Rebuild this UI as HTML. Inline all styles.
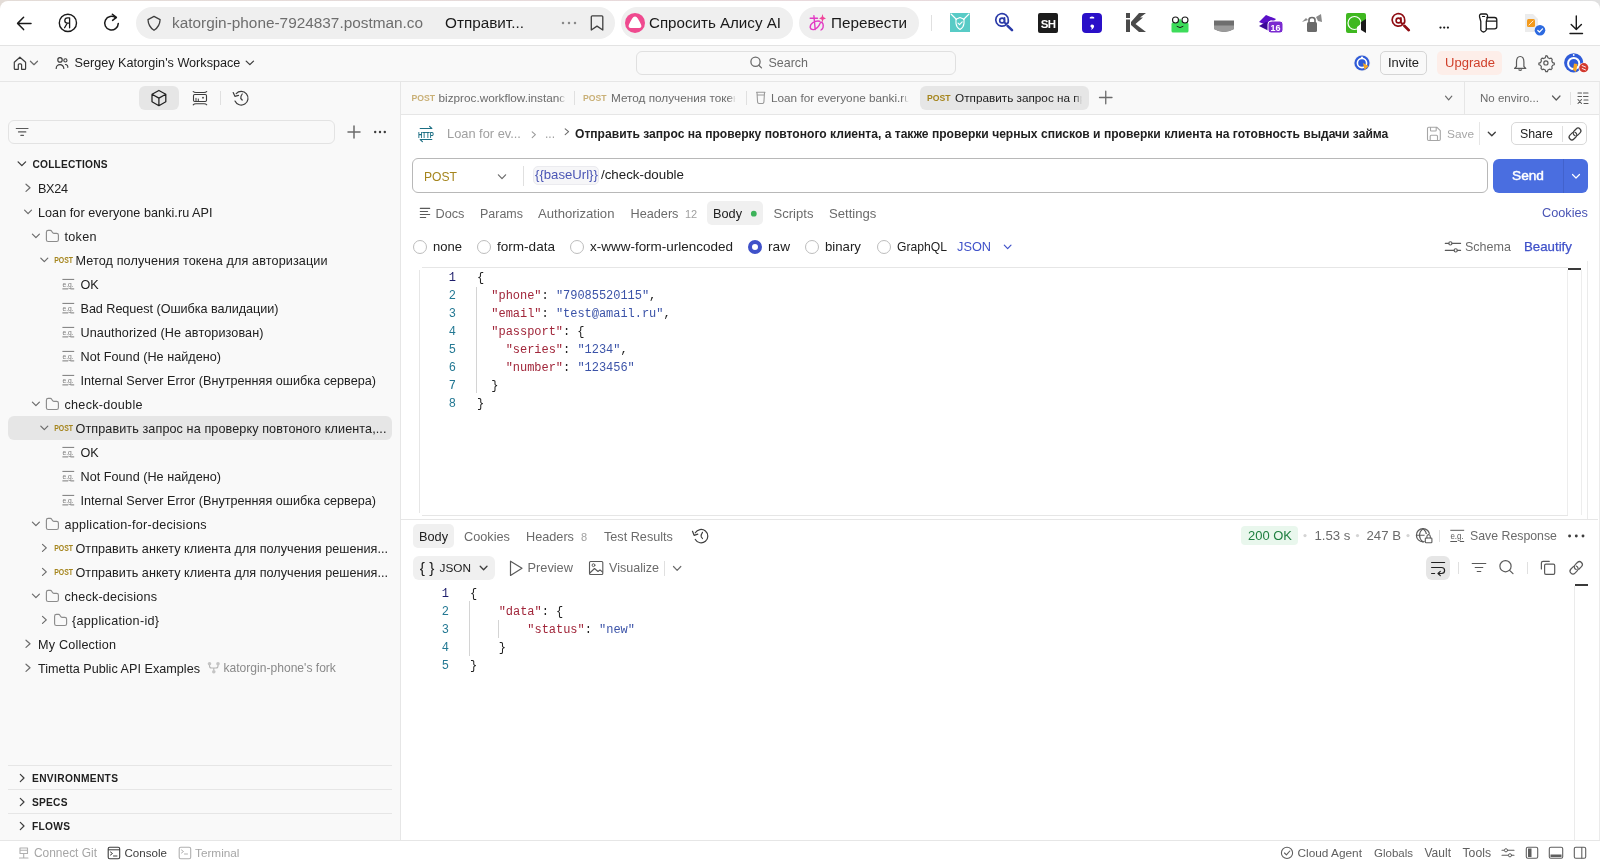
<!DOCTYPE html><html><head><meta charset="utf-8"><style>
html,body{margin:0;padding:0;width:1600px;height:865px;overflow:hidden;background:#fff;}
#root{position:absolute;left:0;top:0;width:1600px;height:865px;will-change:transform;}
.a{position:absolute;}
.t{white-space:pre;}
svg.a{overflow:visible;}
</style></head><body><div id="root">
<div class="a" style="left:0px;top:0px;width:1600px;height:865px;background:#ffffff;"></div>
<div class="a" style="left:0px;top:0px;width:1600px;height:12px;background:linear-gradient(to right,#e3dcd7,#e9d9dc 50%,#e0e0e0);"></div>
<div class="a" style="left:0px;top:1px;width:1600px;height:45px;background:#ffffff;border-radius:8px 8px 0 0;"></div>
<div class="a" style="left:0px;top:45px;width:1600px;height:1px;background:#e3e3e3;"></div>
<div class="a" style="left:0px;top:46px;width:1600px;height:35px;background:#f9f9f9;"></div>
<div class="a" style="left:0px;top:81px;width:1600px;height:1px;background:#e6e6e6;"></div>
<div class="a" style="left:0px;top:82px;width:400px;height:758px;background:#f9f9f9;"></div>
<div class="a" style="left:400px;top:82px;width:1px;height:758px;background:#e6e6e6;"></div>
<div class="a" style="left:401px;top:82px;width:1199px;height:32px;background:#f9f9f9;"></div>
<div class="a" style="left:401px;top:114px;width:1199px;height:1px;background:#e6e6e6;"></div>
<div class="a" style="left:1599px;top:82px;width:1px;height:758px;background:#ebebeb;"></div>
<div class="a" style="left:0px;top:840px;width:1600px;height:1px;background:#e6e6e6;"></div>
<div class="a" style="left:0px;top:841px;width:1600px;height:24px;background:#ffffff;"></div>
<div class="a" style="left:136px;top:7px;width:479px;height:32px;background:#efefef;border-radius:16px;"></div>
<div class="a t" style="left:172px;top:13px;line-height:20px;font-family:'Liberation Sans', sans-serif;font-size:15.36px;color:#6e6e6e;">katorgin-phone-7924837.postman.co</div>
<div class="a t" style="left:445px;top:13px;line-height:20px;font-family:'Liberation Sans', sans-serif;font-size:15.31px;color:#1a1a1a;">Отправит...</div>
<div class="a" style="left:621px;top:7px;width:172px;height:32px;background:#efefef;border-radius:16px;"></div>
<div class="a t" style="left:649px;top:13px;line-height:20px;font-family:'Liberation Sans', sans-serif;font-size:15.13px;color:#1a1a1a;">Спросить Алису AI</div>
<div class="a" style="left:799px;top:7px;width:120px;height:32px;background:#efefef;border-radius:16px;"></div>
<div class="a t" style="left:831px;top:13px;line-height:20px;font-family:'Liberation Sans', sans-serif;font-size:15.26px;color:#1a1a1a;">Перевести</div>
<div class="a" style="left:931px;top:15px;width:1px;height:16px;background:#e0e0e0;"></div>
<div class="a t" style="left:74.5px;top:53px;line-height:20px;font-family:'Liberation Sans', sans-serif;font-size:12.65px;color:#212121;">Sergey Katorgin&#x27;s Workspace</div>
<div class="a" style="left:636px;top:51px;width:320px;height:24px;background:#f9f9f9;border:1px solid #e0e0e0;box-sizing:border-box;border-radius:6px;"></div>
<div class="a t" style="left:768.5px;top:53px;line-height:20px;font-family:'Liberation Sans', sans-serif;font-size:12.46px;color:#6b6b6b;">Search</div>
<div class="a" style="left:1380px;top:51px;width:47px;height:24px;border:1px solid #d5d5d5;box-sizing:border-box;border-radius:5px;"></div>
<div class="a t" style="left:1388px;top:53px;line-height:20px;font-family:'Liberation Sans', sans-serif;font-size:12.97px;color:#212121;">Invite</div>
<div class="a" style="left:1437px;top:51px;width:65px;height:24px;background:#fdeee9;border-radius:5px;"></div>
<div class="a t" style="left:1445px;top:53px;line-height:20px;font-family:'Liberation Sans', sans-serif;font-size:13.03px;color:#d0402b;">Upgrade</div>
<div class="a" style="left:139px;top:86px;width:40px;height:24px;background:#e6e6e6;border-radius:6px;"></div>
<div class="a" style="left:220px;top:91px;width:1px;height:14px;background:#e0e0e0;"></div>
<div class="a" style="left:8px;top:120px;width:327px;height:24px;background:#f9f9f9;border:1px solid #e3e3e3;box-sizing:border-box;border-radius:6px;"></div>
<div class="a t" style="left:32.5px;top:155px;line-height:20px;font-family:'Liberation Sans', sans-serif;font-size:10.2px;color:#212121;font-weight:700;letter-spacing:0.198px;">COLLECTIONS</div>
<div class="a" style="left:8px;top:416px;width:384px;height:24px;background:#e6e6e6;border-radius:6px;"></div>
<div class="a t" style="left:38px;top:179px;line-height:20px;font-family:'Liberation Sans', sans-serif;font-size:12.64px;color:#212121;letter-spacing:-0.297px;">BX24</div>
<div class="a t" style="left:38px;top:203px;line-height:20px;font-family:'Liberation Sans', sans-serif;font-size:12.64px;color:#212121;letter-spacing:0.039px;">Loan for everyone banki.ru API</div>
<div class="a t" style="left:64.5px;top:227px;line-height:20px;font-family:'Liberation Sans', sans-serif;font-size:12.64px;color:#212121;letter-spacing:0.277px;">token</div>
<div class="a t" style="left:75.5px;top:251px;line-height:20px;font-family:'Liberation Sans', sans-serif;font-size:12.64px;color:#212121;letter-spacing:0.108px;">Метод получения токена для авторизации</div>
<div class="a t" style="left:80.5px;top:275px;line-height:20px;font-family:'Liberation Sans', sans-serif;font-size:12.64px;color:#212121;">OK</div>
<div class="a t" style="left:80.5px;top:299px;line-height:20px;font-family:'Liberation Sans', sans-serif;font-size:12.64px;color:#212121;letter-spacing:-0.041px;">Bad Request (Ошибка валидации)</div>
<div class="a t" style="left:80.5px;top:323px;line-height:20px;font-family:'Liberation Sans', sans-serif;font-size:12.64px;color:#212121;letter-spacing:0.104px;">Unauthorized (Не авторизован)</div>
<div class="a t" style="left:80.5px;top:347px;line-height:20px;font-family:'Liberation Sans', sans-serif;font-size:12.64px;color:#212121;letter-spacing:0.026px;">Not Found (Не найдено)</div>
<div class="a t" style="left:80.5px;top:371px;line-height:20px;font-family:'Liberation Sans', sans-serif;font-size:12.64px;color:#212121;letter-spacing:0.017px;">Internal Server Error (Внутренняя ошибка сервера)</div>
<div class="a t" style="left:64.5px;top:395px;line-height:20px;font-family:'Liberation Sans', sans-serif;font-size:12.64px;color:#212121;letter-spacing:0.263px;">check-double</div>
<div class="a t" style="left:75.5px;top:419px;line-height:20px;font-family:'Liberation Sans', sans-serif;font-size:12.64px;color:#212121;letter-spacing:0.088px;">Отправить запрос на проверку повтоного клиента,...</div>
<div class="a t" style="left:80.5px;top:443px;line-height:20px;font-family:'Liberation Sans', sans-serif;font-size:12.64px;color:#212121;">OK</div>
<div class="a t" style="left:80.5px;top:467px;line-height:20px;font-family:'Liberation Sans', sans-serif;font-size:12.64px;color:#212121;letter-spacing:0.026px;">Not Found (Не найдено)</div>
<div class="a t" style="left:80.5px;top:491px;line-height:20px;font-family:'Liberation Sans', sans-serif;font-size:12.64px;color:#212121;letter-spacing:0.017px;">Internal Server Error (Внутренняя ошибка сервера)</div>
<div class="a t" style="left:64.5px;top:515px;line-height:20px;font-family:'Liberation Sans', sans-serif;font-size:12.64px;color:#212121;letter-spacing:0.244px;">application-for-decisions</div>
<div class="a t" style="left:75.5px;top:539px;line-height:20px;font-family:'Liberation Sans', sans-serif;font-size:12.64px;color:#212121;letter-spacing:0.026px;">Отправить анкету клиента для получения решения...</div>
<div class="a t" style="left:75.5px;top:563px;line-height:20px;font-family:'Liberation Sans', sans-serif;font-size:12.64px;color:#212121;letter-spacing:0.026px;">Отправить анкету клиента для получения решения...</div>
<div class="a t" style="left:64.5px;top:587px;line-height:20px;font-family:'Liberation Sans', sans-serif;font-size:12.64px;color:#212121;letter-spacing:0.191px;">check-decisions</div>
<div class="a t" style="left:72px;top:611px;line-height:20px;font-family:'Liberation Sans', sans-serif;font-size:12.64px;color:#212121;letter-spacing:0.278px;">{application-id}</div>
<div class="a t" style="left:38px;top:635px;line-height:20px;font-family:'Liberation Sans', sans-serif;font-size:12.64px;color:#212121;letter-spacing:0.185px;">My Collection</div>
<div class="a t" style="left:38px;top:659px;line-height:20px;font-family:'Liberation Sans', sans-serif;font-size:12.64px;color:#212121;letter-spacing:0.014px;">Timetta Public API Examples</div>
<div class="a t" style="left:223.5px;top:658px;line-height:20px;font-family:'Liberation Sans', sans-serif;font-size:12.09px;color:#8a8a8a;">katorgin-phone&#x27;s fork</div>
<div class="a" style="left:8px;top:765px;width:384px;height:1px;background:#e6e6e6;"></div>
<div class="a" style="left:8px;top:789px;width:384px;height:1px;background:#e6e6e6;"></div>
<div class="a" style="left:8px;top:813px;width:384px;height:1px;background:#e6e6e6;"></div>
<div class="a t" style="left:32px;top:769px;line-height:20px;font-family:'Liberation Sans', sans-serif;font-size:10.2px;color:#212121;font-weight:700;letter-spacing:0.357px;">ENVIRONMENTS</div>
<div class="a t" style="left:32px;top:793px;line-height:20px;font-family:'Liberation Sans', sans-serif;font-size:10.2px;color:#212121;font-weight:700;letter-spacing:0.238px;">SPECS</div>
<div class="a t" style="left:32px;top:817px;line-height:20px;font-family:'Liberation Sans', sans-serif;font-size:10.2px;color:#212121;font-weight:700;letter-spacing:0.305px;">FLOWS</div>
<div class="a t" style="left:34px;top:843px;line-height:20px;font-family:'Liberation Sans', sans-serif;font-size:11.93px;color:#a6a6a6;">Connect Git</div>
<div class="a t" style="left:124.5px;top:843px;line-height:20px;font-family:'Liberation Sans', sans-serif;font-size:11.58px;color:#3d3d3d;">Console</div>
<div class="a t" style="left:195px;top:843px;line-height:20px;font-family:'Liberation Sans', sans-serif;font-size:11.77px;color:#a6a6a6;">Terminal</div>
<div class="a t" style="left:1297.5px;top:843px;line-height:20px;font-family:'Liberation Sans', sans-serif;font-size:11.84px;color:#5f5f5f;">Cloud Agent</div>
<div class="a t" style="left:1374px;top:843px;line-height:20px;font-family:'Liberation Sans', sans-serif;font-size:11.5px;color:#5f5f5f;">Globals</div>
<div class="a t" style="left:1424.5px;top:843px;line-height:20px;font-family:'Liberation Sans', sans-serif;font-size:12.01px;color:#5f5f5f;">Vault</div>
<div class="a t" style="left:1462.5px;top:843px;line-height:20px;font-family:'Liberation Sans', sans-serif;font-size:12.21px;color:#5f5f5f;">Tools</div>
<div class="a t" style="left:411.4px;top:88px;line-height:20px;font-family:'Liberation Sans', sans-serif;font-size:8.66px;color:#c9b077;font-weight:700;">POST</div>
<div class="a t" style="left:438.5px;top:88px;line-height:20px;font-family:'Liberation Sans', sans-serif;font-size:11.75px;color:#6b6b6b;width:127px;overflow:hidden;-webkit-mask-image:linear-gradient(to right,#000 calc(100% - 7px),transparent);">bizproc.workflow.instance.start</div>
<div class="a" style="left:574px;top:91px;width:1px;height:14px;background:#e0e0e0;"></div>
<div class="a t" style="left:583px;top:88px;line-height:20px;font-family:'Liberation Sans', sans-serif;font-size:8.66px;color:#c9b077;font-weight:700;">POST</div>
<div class="a t" style="left:611px;top:88px;line-height:20px;font-family:'Liberation Sans', sans-serif;font-size:11.75px;color:#6b6b6b;width:125px;overflow:hidden;-webkit-mask-image:linear-gradient(to right,#000 calc(100% - 7px),transparent);">Метод получения токена</div>
<div class="a" style="left:746px;top:91px;width:1px;height:14px;background:#e0e0e0;"></div>
<div class="a t" style="left:771px;top:88px;line-height:20px;font-family:'Liberation Sans', sans-serif;font-size:11.75px;color:#6b6b6b;width:138px;overflow:hidden;-webkit-mask-image:linear-gradient(to right,#000 calc(100% - 7px),transparent);">Loan for everyone banki.ru API</div>
<div class="a" style="left:920px;top:86px;width:169px;height:24px;background:#e6e6e6;border-radius:6px;"></div>
<div class="a t" style="left:927px;top:88px;line-height:20px;font-family:'Liberation Sans', sans-serif;font-size:8.66px;color:#a5851d;font-weight:700;">POST</div>
<div class="a t" style="left:955px;top:88px;line-height:20px;font-family:'Liberation Sans', sans-serif;font-size:11.75px;color:#212121;width:127px;overflow:hidden;-webkit-mask-image:linear-gradient(to right,#000 calc(100% - 7px),transparent);">Отправить запрос на проверку</div>
<div class="a t" style="left:1480px;top:88px;line-height:20px;font-family:'Liberation Sans', sans-serif;font-size:11.54px;color:#6b6b6b;">No enviro...</div>
<div class="a" style="left:1464px;top:82px;width:1px;height:32px;background:#e6e6e6;"></div>
<div class="a" style="left:1570px;top:92px;width:1px;height:13px;background:#e0e0e0;"></div>
<div class="a t" style="left:447px;top:124px;line-height:20px;font-family:'Liberation Sans', sans-serif;font-size:12.84px;color:#a0a0a0;">Loan for ev...</div>
<div class="a t" style="left:545px;top:124px;line-height:20px;font-family:'Liberation Sans', sans-serif;font-size:11.99px;color:#a0a0a0;">...</div>
<div class="a t" style="left:575px;top:124px;line-height:20px;font-family:'Liberation Sans', sans-serif;font-size:12.09px;color:#212121;font-weight:700;">Отправить запрос на проверку повтоного клиента, а также проверки черных списков и проверки клиента на готовность выдачи займа</div>
<div class="a t" style="left:1447px;top:124px;line-height:20px;font-family:'Liberation Sans', sans-serif;font-size:11.84px;color:#a6a6a6;">Save</div>
<div class="a" style="left:1479px;top:122px;width:1px;height:23px;background:#e6e6e6;"></div>
<div class="a" style="left:1511px;top:122px;width:76px;height:23px;border:1px solid #d9d9d9;box-sizing:border-box;border-radius:5px;"></div>
<div class="a t" style="left:1520px;top:124px;line-height:20px;font-family:'Liberation Sans', sans-serif;font-size:12.36px;color:#212121;">Share</div>
<div class="a" style="left:1562px;top:126px;width:1px;height:16px;background:#e0e0e0;"></div>
<div class="a" style="left:412px;top:158px;width:1076px;height:35px;border:1px solid #b8b8b8;box-sizing:border-box;border-radius:6px;"></div>
<div class="a t" style="left:424px;top:167px;line-height:20px;font-family:'Liberation Sans', sans-serif;font-size:12.12px;color:#a5851d;">POST</div>
<div class="a" style="left:523px;top:166px;width:1px;height:20px;background:#e0e0e0;"></div>
<div class="a" style="left:533px;top:166px;width:66px;height:19px;background:#f6f6f8;border:1px solid #ebebef;box-sizing:border-box;border-radius:5px;"></div>
<div class="a t" style="left:535px;top:165px;line-height:20px;font-family:'Liberation Sans', sans-serif;font-size:13.17px;color:#4a55b5;">{{baseUrl}}</div>
<div class="a t" style="left:601px;top:165px;line-height:20px;font-family:'Liberation Sans', sans-serif;font-size:13.33px;color:#212121;">/check-double</div>
<div class="a" style="left:1493px;top:159px;width:95px;height:34px;background:#4a6ee0;border-radius:6px;"></div>
<div class="a" style="left:1563px;top:159px;width:1px;height:34px;background:#4262cc;"></div>
<div class="a t" style="left:1512px;top:166px;line-height:20px;font-family:'Liberation Sans', sans-serif;font-size:13.7px;color:#ffffff;-webkit-text-stroke:0.45px #fff;">Send</div>
<div class="a t" style="left:435.5px;top:204px;line-height:20px;font-family:'Liberation Sans', sans-serif;font-size:12.73px;color:#6b6b6b;">Docs</div>
<div class="a t" style="left:480px;top:204px;line-height:20px;font-family:'Liberation Sans', sans-serif;font-size:12.48px;color:#6b6b6b;">Params</div>
<div class="a t" style="left:538px;top:204px;line-height:20px;font-family:'Liberation Sans', sans-serif;font-size:13.1px;color:#6b6b6b;">Authorization</div>
<div class="a t" style="left:630.5px;top:204px;line-height:20px;font-family:'Liberation Sans', sans-serif;font-size:12.7px;color:#6b6b6b;">Headers</div>
<div class="a t" style="left:685px;top:204px;line-height:20px;font-family:'Liberation Sans', sans-serif;font-size:11px;color:#a0a0a0;">12</div>
<div class="a" style="left:707px;top:201px;width:56px;height:24px;background:#f0f0f0;border-radius:5px;"></div>
<div class="a t" style="left:713px;top:204px;line-height:20px;font-family:'Liberation Sans', sans-serif;font-size:12.72px;color:#212121;">Body</div>
<div class="a t" style="left:773.5px;top:204px;line-height:20px;font-family:'Liberation Sans', sans-serif;font-size:13.09px;color:#6b6b6b;">Scripts</div>
<div class="a t" style="left:829px;top:204px;line-height:20px;font-family:'Liberation Sans', sans-serif;font-size:13.14px;color:#6b6b6b;">Settings</div>
<div class="a t" style="left:1542px;top:203px;line-height:20px;font-family:'Liberation Sans', sans-serif;font-size:12.73px;color:#4a55b5;">Cookies</div>
<div class="a" style="left:413px;top:240px;width:14px;height:14px;background:#fff;border:1px solid #bdbdbd;box-sizing:border-box;border-radius:7px;"></div>
<div class="a t" style="left:433px;top:237px;line-height:20px;font-family:'Liberation Sans', sans-serif;font-size:13.04px;color:#212121;">none</div>
<div class="a" style="left:477px;top:240px;width:14px;height:14px;background:#fff;border:1px solid #bdbdbd;box-sizing:border-box;border-radius:7px;"></div>
<div class="a t" style="left:497px;top:237px;line-height:20px;font-family:'Liberation Sans', sans-serif;font-size:13.55px;color:#212121;">form-data</div>
<div class="a" style="left:570px;top:240px;width:14px;height:14px;background:#fff;border:1px solid #bdbdbd;box-sizing:border-box;border-radius:7px;"></div>
<div class="a t" style="left:590px;top:237px;line-height:20px;font-family:'Liberation Sans', sans-serif;font-size:13.47px;color:#212121;">x-www-form-urlencoded</div>
<div class="a" style="left:805px;top:240px;width:14px;height:14px;background:#fff;border:1px solid #bdbdbd;box-sizing:border-box;border-radius:7px;"></div>
<div class="a t" style="left:825px;top:237px;line-height:20px;font-family:'Liberation Sans', sans-serif;font-size:13.21px;color:#212121;">binary</div>
<div class="a" style="left:877px;top:240px;width:14px;height:14px;background:#fff;border:1px solid #bdbdbd;box-sizing:border-box;border-radius:7px;"></div>
<div class="a t" style="left:897px;top:237px;line-height:20px;font-family:'Liberation Sans', sans-serif;font-size:12.15px;color:#212121;">GraphQL</div>
<div class="a" style="left:748px;top:240px;width:14px;height:14px;background:#fff;border:4px solid #3f51c9;box-sizing:border-box;border-radius:7px;"></div>
<div class="a t" style="left:768px;top:237px;line-height:20px;font-family:'Liberation Sans', sans-serif;font-size:13.65px;color:#212121;">raw</div>
<div class="a t" style="left:957px;top:237px;line-height:20px;font-family:'Liberation Sans', sans-serif;font-size:12.75px;color:#3f51c9;">JSON</div>
<div class="a t" style="left:1465px;top:237px;line-height:20px;font-family:'Liberation Sans', sans-serif;font-size:12.54px;color:#6b6b6b;">Schema</div>
<div class="a t" style="left:1524px;top:237px;line-height:20px;font-family:'Liberation Sans', sans-serif;font-size:13.28px;color:#3f51c9;-webkit-text-stroke:0.25px #3f51c9;">Beautify</div>
<div class="a" style="left:422px;top:267px;width:1146px;height:1px;background:#e6e6e6;"></div>
<div class="a" style="left:419px;top:270px;width:1px;height:243px;background:#e6e6e6;"></div>
<div class="a" style="left:422px;top:515px;width:1146px;height:1px;background:#e6e6e6;"></div>
<div class="a" style="left:1567px;top:270px;width:1px;height:245px;background:#ededed;"></div>
<div class="a" style="left:1581px;top:270px;width:1px;height:245px;background:#ededed;"></div>
<div class="a" style="left:1568px;top:268px;width:13px;height:2px;background:#3a3a3a;"></div>
<div class="a" style="left:1587px;top:261px;width:1px;height:258px;background:#ebebeb;"></div>
<div class="a" style="left:401px;top:519px;width:1197px;height:1px;background:#e6e6e6;"></div>
<div class="a t" style="left:436px;top:268px;line-height:20px;font-family:'Liberation Mono', monospace;font-size:12px;color:#1d1d6b;text-align:right;width:20px;">1</div>
<div class="a t" style="left:477px;top:268px;line-height:20px;font-family:'Liberation Mono', monospace;font-size:12px;color:#212121;letter-spacing:-0.033px;"><span style="color:#212121">{</span></div>
<div class="a t" style="left:436px;top:286px;line-height:20px;font-family:'Liberation Mono', monospace;font-size:12px;color:#237893;text-align:right;width:20px;">2</div>
<div class="a t" style="left:477px;top:286px;line-height:20px;font-family:'Liberation Mono', monospace;font-size:12px;color:#212121;letter-spacing:-0.033px;"><span style="color:#212121">  </span><span style="color:#a1263a">&quot;phone&quot;</span><span style="color:#212121">: </span><span style="color:#3b53a8">&quot;79085520115&quot;</span><span style="color:#212121">,</span></div>
<div class="a t" style="left:436px;top:304px;line-height:20px;font-family:'Liberation Mono', monospace;font-size:12px;color:#237893;text-align:right;width:20px;">3</div>
<div class="a t" style="left:477px;top:304px;line-height:20px;font-family:'Liberation Mono', monospace;font-size:12px;color:#212121;letter-spacing:-0.033px;"><span style="color:#212121">  </span><span style="color:#a1263a">&quot;email&quot;</span><span style="color:#212121">: </span><span style="color:#3b53a8">&quot;test@amail.ru&quot;</span><span style="color:#212121">,</span></div>
<div class="a t" style="left:436px;top:322px;line-height:20px;font-family:'Liberation Mono', monospace;font-size:12px;color:#237893;text-align:right;width:20px;">4</div>
<div class="a t" style="left:477px;top:322px;line-height:20px;font-family:'Liberation Mono', monospace;font-size:12px;color:#212121;letter-spacing:-0.033px;"><span style="color:#212121">  </span><span style="color:#a1263a">&quot;passport&quot;</span><span style="color:#212121">: {</span></div>
<div class="a t" style="left:436px;top:340px;line-height:20px;font-family:'Liberation Mono', monospace;font-size:12px;color:#237893;text-align:right;width:20px;">5</div>
<div class="a t" style="left:477px;top:340px;line-height:20px;font-family:'Liberation Mono', monospace;font-size:12px;color:#212121;letter-spacing:-0.033px;"><span style="color:#212121">    </span><span style="color:#a1263a">&quot;series&quot;</span><span style="color:#212121">: </span><span style="color:#3b53a8">&quot;1234&quot;</span><span style="color:#212121">,</span></div>
<div class="a t" style="left:436px;top:358px;line-height:20px;font-family:'Liberation Mono', monospace;font-size:12px;color:#237893;text-align:right;width:20px;">6</div>
<div class="a t" style="left:477px;top:358px;line-height:20px;font-family:'Liberation Mono', monospace;font-size:12px;color:#212121;letter-spacing:-0.033px;"><span style="color:#212121">    </span><span style="color:#a1263a">&quot;number&quot;</span><span style="color:#212121">: </span><span style="color:#3b53a8">&quot;123456&quot;</span></div>
<div class="a t" style="left:436px;top:376px;line-height:20px;font-family:'Liberation Mono', monospace;font-size:12px;color:#237893;text-align:right;width:20px;">7</div>
<div class="a t" style="left:477px;top:376px;line-height:20px;font-family:'Liberation Mono', monospace;font-size:12px;color:#212121;letter-spacing:-0.033px;"><span style="color:#212121">  }</span></div>
<div class="a t" style="left:436px;top:394px;line-height:20px;font-family:'Liberation Mono', monospace;font-size:12px;color:#237893;text-align:right;width:20px;">8</div>
<div class="a t" style="left:477px;top:394px;line-height:20px;font-family:'Liberation Mono', monospace;font-size:12px;color:#212121;letter-spacing:-0.033px;"><span style="color:#212121">}</span></div>
<div class="a" style="left:476px;top:287px;width:1px;height:106px;background:#d4d4d4;"></div>
<div class="a" style="left:413px;top:524px;width:41px;height:24px;background:#f0f0f0;border-radius:5px;"></div>
<div class="a t" style="left:419px;top:527px;line-height:20px;font-family:'Liberation Sans', sans-serif;font-size:12.72px;color:#212121;">Body</div>
<div class="a t" style="left:464px;top:527px;line-height:20px;font-family:'Liberation Sans', sans-serif;font-size:12.73px;color:#6b6b6b;">Cookies</div>
<div class="a t" style="left:526px;top:527px;line-height:20px;font-family:'Liberation Sans', sans-serif;font-size:12.7px;color:#6b6b6b;">Headers</div>
<div class="a t" style="left:581px;top:527px;line-height:20px;font-family:'Liberation Sans', sans-serif;font-size:11px;color:#a0a0a0;">8</div>
<div class="a t" style="left:604px;top:527px;line-height:20px;font-family:'Liberation Sans', sans-serif;font-size:12.67px;color:#6b6b6b;">Test Results</div>
<div class="a" style="left:1241px;top:526px;width:57px;height:19px;background:#e9f7ed;border-radius:4px;"></div>
<div class="a t" style="left:1248px;top:526px;line-height:20px;font-family:'Liberation Sans', sans-serif;font-size:12.97px;color:#1e7f3f;">200 OK</div>
<div class="a t" style="left:1314.5px;top:526px;line-height:20px;font-family:'Liberation Sans', sans-serif;font-size:13.21px;color:#6b6b6b;">1.53 s</div>
<div class="a t" style="left:1366.5px;top:526px;line-height:20px;font-family:'Liberation Sans', sans-serif;font-size:13.2px;color:#6b6b6b;">247 B</div>
<div class="a t" style="left:1470px;top:526px;line-height:20px;font-family:'Liberation Sans', sans-serif;font-size:12.32px;color:#6b6b6b;">Save Response</div>
<div class="a" style="left:1439px;top:530px;width:1px;height:12px;background:#e0e0e0;"></div>
<div class="a" style="left:413px;top:556px;width:82px;height:24px;background:#f0f0f0;border-radius:6px;"></div>
<div class="a t" style="left:439.5px;top:558px;line-height:20px;font-family:'Liberation Sans', sans-serif;font-size:11.81px;color:#212121;">JSON</div>
<div class="a t" style="left:527.5px;top:558px;line-height:20px;font-family:'Liberation Sans', sans-serif;font-size:12.79px;color:#6b6b6b;">Preview</div>
<div class="a t" style="left:609px;top:558px;line-height:20px;font-family:'Liberation Sans', sans-serif;font-size:12.55px;color:#6b6b6b;">Visualize</div>
<div class="a" style="left:664px;top:561px;width:1px;height:15px;background:#e0e0e0;"></div>
<div class="a" style="left:1426px;top:556px;width:24px;height:24px;background:#e6e6e6;border-radius:6px;"></div>
<div class="a" style="left:1458px;top:562px;width:1px;height:12px;background:#e0e0e0;"></div>
<div class="a" style="left:1527px;top:562px;width:1px;height:12px;background:#e0e0e0;"></div>
<div class="a" style="left:1575px;top:584px;width:13px;height:2px;background:#3a3a3a;"></div>
<div class="a" style="left:1574px;top:586px;width:1px;height:254px;background:#ebebeb;"></div>
<div class="a t" style="left:429px;top:584px;line-height:20px;font-family:'Liberation Mono', monospace;font-size:12px;color:#1d1d6b;text-align:right;width:20px;">1</div>
<div class="a t" style="left:470px;top:584px;line-height:20px;font-family:'Liberation Mono', monospace;font-size:12px;color:#212121;letter-spacing:-0.033px;"><span style="color:#212121">{</span></div>
<div class="a t" style="left:429px;top:602px;line-height:20px;font-family:'Liberation Mono', monospace;font-size:12px;color:#237893;text-align:right;width:20px;">2</div>
<div class="a t" style="left:470px;top:602px;line-height:20px;font-family:'Liberation Mono', monospace;font-size:12px;color:#212121;letter-spacing:-0.033px;"><span style="color:#212121">    </span><span style="color:#a1263a">&quot;data&quot;</span><span style="color:#212121">: {</span></div>
<div class="a t" style="left:429px;top:620px;line-height:20px;font-family:'Liberation Mono', monospace;font-size:12px;color:#237893;text-align:right;width:20px;">3</div>
<div class="a t" style="left:470px;top:620px;line-height:20px;font-family:'Liberation Mono', monospace;font-size:12px;color:#212121;letter-spacing:-0.033px;"><span style="color:#212121">        </span><span style="color:#a1263a">&quot;status&quot;</span><span style="color:#212121">: </span><span style="color:#3b53a8">&quot;new&quot;</span></div>
<div class="a t" style="left:429px;top:638px;line-height:20px;font-family:'Liberation Mono', monospace;font-size:12px;color:#237893;text-align:right;width:20px;">4</div>
<div class="a t" style="left:470px;top:638px;line-height:20px;font-family:'Liberation Mono', monospace;font-size:12px;color:#212121;letter-spacing:-0.033px;"><span style="color:#212121">    }</span></div>
<div class="a t" style="left:429px;top:656px;line-height:20px;font-family:'Liberation Mono', monospace;font-size:12px;color:#237893;text-align:right;width:20px;">5</div>
<div class="a t" style="left:470px;top:656px;line-height:20px;font-family:'Liberation Mono', monospace;font-size:12px;color:#212121;letter-spacing:-0.033px;"><span style="color:#212121">}</span></div>
<div class="a" style="left:469px;top:601px;width:1px;height:55px;background:#d4d4d4;"></div>
<div class="a" style="left:498px;top:620px;width:1px;height:18px;background:#d4d4d4;"></div>
<svg class="a" style="left:0;top:0" width="1600" height="865" fill="none" stroke-linecap="round" stroke-linejoin="round">
<path d="M17.8 23.4H31M23.6 17.3L17.6 23.4L23.6 29.6" stroke="#1a1a1a" stroke-width="1.5" />
<circle cx="67.9" cy="22.9" r="8.6" stroke="#1a1a1a" stroke-width="1.4" fill="none"/>
<path d="M69.6 27.8V17.8H67.6Q64.8 17.8 64.8 20.6Q64.8 23.2 67.6 23.2H69.4M67.2 23.2L64.6 27.8" stroke="#1a1a1a" stroke-width="1.3" />
<path d="M118.3 23.4A6.8 6.8 0 1 1 115.8 17.9" stroke="#1a1a1a" stroke-width="1.5" />
<path d="M112.4 14.3L116.4 17.3L112.6 20.4" stroke="#1a1a1a" stroke-width="1.5" />
<path d="M154 16.4L148 19.6Q148.3 26.6 154 30.3Q159.8 26.6 160.1 19.6Z" stroke="#404040" stroke-width="1.3" />
<circle cx="563" cy="22.9" r="1.25" fill="#8a8a8a"/>
<circle cx="569" cy="22.9" r="1.25" fill="#8a8a8a"/>
<circle cx="575" cy="22.9" r="1.25" fill="#8a8a8a"/>
<path d="M591.3 16.8Q591.3 15.8 592.3 15.8H601.8Q602.8 15.8 602.8 16.8V30L597 26.1L591.3 30Z" stroke="#404040" stroke-width="1.3" />
<circle cx="635" cy="22.9" r="10" fill="#ef4a8f"/>
<path d="M635 16.4Q636.6 16.4 637.8 18.4Q640.2 22.3 641.2 25Q642 27.6 639.3 28H630.7Q628 27.6 628.8 25Q629.8 22.3 632.2 18.4Q633.4 16.4 635 16.4Z" fill="#ffffff"/>
<path d="M810.2 18.3H817.5M813.9 15.6L815.2 29.5M819.5 21.2Q816.5 20.5 813 22.5Q810 24.5 810.2 27.5Q810.8 30 814 29.5Q818 28.5 820.5 22.5M820.8 22Q824 23 823 27.5Q822.5 29.2 821 30" stroke="#e23bc4" stroke-width="1.4" />
<path d="M822.5 14L823.4 17.1L826 18.4L823.4 19.5L822.5 22.6L821.6 19.5L819 18.4L821.6 17.1Z" fill="#f0459a"/>
<path d="M950 13H970V32H950Z" fill="#58cbc6"/>
<path d="M951 14L956.5 19.5M969 14L963.5 19.5" stroke="#ffffff" stroke-width="1.1" />
<path d="M960 17.5L956 19.2V23.5Q956.5 27.5 960 29.5Q963.5 27.5 964 23.5V19.2Z" stroke="#ffffff" stroke-width="1.1" />
<path d="M958 23.2L959.5 24.7L962.2 21.8" stroke="#ffffff" stroke-width="1.1" />
<path d="M1006.5 24.3A6.3 6.3 0 1 1 1008.3 20.3V21.6Q1008.3 23.6 1006.4 23.6Q1004.5 23.6 1004.5 21.6V17.8" stroke="#2a3aa8" stroke-width="1.7"/>
<circle cx="1002.1" cy="20.5" r="2.4" stroke="#2a3aa8" stroke-width="1.6" fill="none"/>
<path d="M1007.6 25.8L1012 30.2" stroke="#2a3aa8" stroke-width="2.6" />
<rect x="1038" y="13" width="20" height="20" rx="2" fill="#1c1c1c"/>
<text x="1048" y="28" text-anchor="middle" font-family="Liberation Sans" font-weight="700" font-size="11.5" fill="#ffffff" letter-spacing="-0.8">SH</text>
<rect x="1082" y="13" width="20" height="20" rx="4" fill="#2a10c8"/>
<path d="M1089.8 17.2Q1092 15.8 1094.2 17.2V18.5H1089.8Z" fill="#ffffff"/>
<path d="M1092 24.5Q1094.5 24.5 1094 27Q1093.2 28.8 1091 30Q1092.2 28.3 1091.5 27.6Q1090 27 1090.5 25.6Q1091 24.5 1092 24.5Z" fill="#ffffff"/>
<path d="M1126 13H1130V18H1126ZM1126 19.5H1130V32H1126ZM1131 22L1139 13H1146L1140 17.5L1143 17.5L1135.5 24L1146 32H1139L1131 25Z" fill="#4a4a4a"/>
<rect x="1171.5" y="22.5" width="17" height="10" rx="1.5" fill="#3ddc5a"/>
<path d="M1180 18.5L1185 25H1175Z" fill="#3ddc5a"/>
<circle cx="1175.5" cy="20" r="3" stroke="#1a1a1a" stroke-width="1.1" fill="#ffffff"/>
<circle cx="1185" cy="20" r="3" stroke="#1a1a1a" stroke-width="1.1" fill="#ffffff"/>
<path d="M1177 26.5Q1180 29 1183 26.5" stroke="#1a1a1a" stroke-width="1" />
<path d="M1214 20.5H1234V29Q1224 35 1214 29Z" fill="#6e6e6e"/>
<path d="M1214 25.5H1234V29Q1224 35 1214 29Z" fill="#9a9a9a"/>
<path d="M1259 22L1266 15L1276 19L1269 26Z" fill="#5a10c8"/>
<path d="M1259 26L1266 22L1276 26L1269 31Z" fill="#3a0898"/>
<rect x="1268" y="21" width="15" height="12" rx="3" fill="#7a2ad0" stroke="#ffffff" stroke-width="1"/>
<text x="1275.5" y="30.8" text-anchor="middle" font-family="Liberation Sans" font-weight="700" font-size="9" fill="#ffffff">16</text>
<rect x="1307" y="22" width="10" height="10" rx="1.5" fill="#6a6a6a"/>
<path d="M1309 22.5V20Q1309 17.5 1312 17.5Q1315 17.5 1315 20V22.5" stroke="#6a6a6a" stroke-width="1.6" />
<path d="M1302 22L1306 18L1308 20ZM1316 17L1321 14L1322 22L1318 21Z" fill="#8a8a8a"/>
<rect x="1346" y="13" width="20" height="20" rx="2" fill="#3fb820"/>
<circle cx="1354.5" cy="23" r="6.5" stroke="#ffffff" stroke-width="1.2" fill="none"/>
<path d="M1357 27L1366 20V33H1357Z" fill="#ffffff"/>
<path d="M1361 22L1366 19V33L1361 30Z" fill="#1a1a1a"/>
<path d="M1402.9 24.3A6.3 6.3 0 1 1 1404.7 20.3V21.6Q1404.7 23.6 1402.8 23.6Q1400.9 23.6 1400.9 21.6V17.8" stroke="#8f0d13" stroke-width="1.7"/>
<circle cx="1398.5" cy="20.5" r="2.4" stroke="#8f0d13" stroke-width="1.6" fill="none"/>
<path d="M1404.3 25.8L1408.8 30.2" stroke="#8f0d13" stroke-width="2.6" />
<circle cx="1440.5" cy="27.6" r="1.1" fill="#1a1a1a"/>
<circle cx="1444.2" cy="27.6" r="1.1" fill="#1a1a1a"/>
<circle cx="1447.9" cy="27.6" r="1.1" fill="#1a1a1a"/>
<path d="M1481.5 14H1485.5Q1488 14 1487.5 17L1486.3 21.5V30Q1485 32 1483.5 32Q1482 32 1480.8 30V21.5L1479.6 17Q1479 14 1481.5 14Z" stroke="#1a1a1a" stroke-width="1.3" />
<path d="M1482.5 16.5H1484.6" stroke="#1a1a1a" stroke-width="1.2" />
<path d="M1487 17.5H1494.5Q1496.8 17.5 1496.8 19.8V26.8Q1496.8 28.8 1494.5 28.8H1486.3M1487 21.2H1496.5" stroke="#1a1a1a" stroke-width="1.3" />
<path d="M1525 14H1533L1538 19V32H1525Z" fill="#ececec"/>
<rect x="1527" y="19" width="8" height="8" rx="1.5" fill="#f39a1c"/>
<path d="M1529 25L1533 21" stroke="#ffffff" stroke-width="0.8" />
<circle cx="1540" cy="30.3" r="5.3" fill="#2d6ae0"/>
<path d="M1537.8 30.5L1539.5 32L1542.5 28.8" stroke="#ffffff" stroke-width="1.2" />
<path d="M1576.3 16V29.5M1571.2 24.5L1576.3 29.5L1581.4 24.5M1570 33.5H1582.5" stroke="#1a1a1a" stroke-width="1.4" />
<path d="M14.3 62.3L19.9 57.2L25.6 62.3V68.4Q25.6 69.3 24.7 69.3H21.6V64.8Q21.6 63.8 20.6 63.8H19.3Q18.3 63.8 18.3 64.8V69.3H15.2Q14.3 69.3 14.3 68.4Z" stroke="#3d3d3d" stroke-width="1.2" />
<path d="M30.4 61.2L33.95 64.7L37.5 61.2" stroke="#6b6b6b" stroke-width="1.2" />
<circle cx="60" cy="59.9" r="2.2" stroke="#3d3d3d" stroke-width="1.2" fill="none"/>
<path d="M56.2 68.4A3.8 3.8 0 0 1 63.8 68.4" stroke="#3d3d3d" stroke-width="1.2" />
<circle cx="65.4" cy="60.4" r="1.6" stroke="#3d3d3d" stroke-width="1.1" fill="none"/>
<path d="M65.4 64.5A2.4 2.4 0 0 1 67.8 67.4" stroke="#3d3d3d" stroke-width="1.1" />
<path d="M246.2 61.1L249.85 64.6L253.5 61.1" stroke="#3d3d3d" stroke-width="1.3" />
<circle cx="755.5" cy="61.8" r="4.6" stroke="#6b6b6b" stroke-width="1.3" fill="none"/>
<path d="M758.8 65.2L761.5 67.9" stroke="#6b6b6b" stroke-width="1.3" />
<circle cx="1362" cy="63" r="8.3" fill="#eeeeee"/>
<circle cx="1362" cy="63" r="7.6" fill="#2f5bd8"/>
<circle cx="1362" cy="63" r="4.6" stroke="#ffffff" stroke-width="1.6" fill="none"/>
<circle cx="1362" cy="57.5" r="1.1" fill="#ffffff"/>
<path d="M1363 63L1368.5 66L1364.5 70Z" fill="#f5a623"/>
<path d="M1516.5 66.5V62Q1516.5 56.5 1520.2 56.5Q1523.9 56.5 1523.9 62V66.5L1525.8 68.4H1514.6Z" stroke="#5a5a5a" stroke-width="1.2" />
<path d="M1518.8 69.8Q1520.2 71 1521.6 69.8" stroke="#5a5a5a" stroke-width="1.2" />
<path d="M1545.9 55.7l1.5 0.4 0.5 1.6 1.6 0.9 1.6-0.4 1.1 1.2-0.4 1.6 0.9 1.6 1.6 0.5v1.6l-1.6 0.5-0.9 1.6 0.4 1.6-1.1 1.2-1.6-0.4-1.6 0.9-0.5 1.6h-1.6l-0.5-1.6-1.6-0.9-1.6 0.4-1.1-1.2 0.4-1.6-0.9-1.6-1.6-0.5v-1.6l1.6-0.5 0.9-1.6-0.4-1.6 1.1-1.2 1.6 0.4 1.6-0.9 0.5-1.6z" stroke="#5a5a5a" stroke-width="1.2"/>
<circle cx="1545.9" cy="62.9" r="2.1" stroke="#5a5a5a" stroke-width="1.2" fill="none"/>
<circle cx="1573.7" cy="62.8" r="9.6" fill="#2f5bd8"/>
<circle cx="1573.7" cy="63.5" r="5.6" stroke="#ffffff" stroke-width="2.0" fill="none"/>
<circle cx="1573.7" cy="63.5" r="3.5" fill="#2f5bd8"/>
<circle cx="1573.7" cy="55" r="0.9" fill="#ffffff"/>
<path d="M1574 63.5L1577.5 64L1576 72L1573 70Z" fill="#f5a623"/>
<circle cx="1583.8" cy="67.7" r="5.3" fill="#ffffff"/>
<circle cx="1583.8" cy="67.7" r="4.6" fill="#d23a2f"/>
<path d="M1582.2 65.6L1585.5 67M1582.2 68.5L1585.5 69.9" stroke="#ffffff" stroke-width="0.9" />
<path d="M158.9 90.5L165.8 94.3V101.8L158.9 105.7L152 101.8V94.3ZM152 94.3L158.9 98.1L165.8 94.3M158.9 98.1V105.7" stroke="#212121" stroke-width="1.25" />
<path d="M193.2 91.5Q194 92.5 196 92.5H204Q206 92.5 206.7 91.5M193.2 104.8Q194 103.8 196 103.8H204Q206 103.8 206.7 104.8" stroke="#3d3d3d" stroke-width="1.1" />
<rect x="193.5" y="94.5" width="13" height="7" rx="1.2" stroke="#3d3d3d" stroke-width="1.1"/>
<path d="M196 101.3V98.3M198.3 101.3V99" stroke="#3d3d3d" stroke-width="1.0" />
<rect x="202.2" y="96.9" width="1.6" height="1.6" fill="#3d3d3d"/>
<path d="M236.2 93.6A6.8 6.8 0 1 1 235 101" stroke="#3d3d3d" stroke-width="1.2" />
<path d="M233.2 92.5L234.9 96.3L238.5 95.3" stroke="#3d3d3d" stroke-width="1.2" />
<path d="M242.2 94Q240.2 96.5 240.8 98.5L242.2 100" stroke="#3d3d3d" stroke-width="1.2" />
<path d="M16.3 128.5H28M18.5 131.9H25.8M20.8 135.3H23.5" stroke="#5a5a5a" stroke-width="1.2" />
<path d="M348 132H360M354 126V138" stroke="#6b6b6b" stroke-width="1.5" />
<circle cx="375.2" cy="132" r="1.2" fill="#3d3d3d"/>
<circle cx="380" cy="132" r="1.2" fill="#3d3d3d"/>
<circle cx="384.8" cy="132" r="1.2" fill="#3d3d3d"/>
<path d="M18.1 161.9L21.85 165.6L25.6 161.9" stroke="#3d3d3d" stroke-width="1.3" />
<path d="M26 184.2L30 187.8L26 191.4" stroke="#6b6b6b" stroke-width="1.2" />
<path d="M24.6 210.2L28.05 213.7L31.5 210.2" stroke="#6b6b6b" stroke-width="1.2" />
<path d="M32.4 234.2L35.9 237.7L39.4 234.2" stroke="#6b6b6b" stroke-width="1.2" />
<path d="M46.4 232.20000000000002Q46.4 230.4 48.199999999999996 230.4H50.4Q51.199999999999996 230.4 51.699999999999996 231.20000000000002L52.3 232.20000000000002Q52.9 233.3 53.8 233.3H56.599999999999994Q58.4 233.3 58.4 235.1V239.70000000000002Q58.4 241.5 56.599999999999994 241.5H48.199999999999996Q46.4 241.5 46.4 239.70000000000002Z" stroke="#8c8c8c" stroke-width="1.15" />
<path d="M40.8 258.2L44.3 261.7L47.8 258.2" stroke="#6b6b6b" stroke-width="1.2" />
<text x="54.2" y="263" font-family="Liberation Sans" font-weight="700" font-size="8.8" fill="#a5851d" textLength="18.8" lengthAdjust="spacingAndGlyphs">POST</text>
<path d="M62.8 279.4H73.8M62.8 288.9H67.8M70.8 288.9H73.8" stroke="#7a7a7a" stroke-width="1.0" />
<text x="62.5" y="286.7" font-family="Liberation Sans" font-size="7.4" fill="#7a7a7a" textLength="11.2" lengthAdjust="spacingAndGlyphs">e.g.</text>
<path d="M62.8 303.4H73.8M62.8 312.9H67.8M70.8 312.9H73.8" stroke="#7a7a7a" stroke-width="1.0" />
<text x="62.5" y="310.7" font-family="Liberation Sans" font-size="7.4" fill="#7a7a7a" textLength="11.2" lengthAdjust="spacingAndGlyphs">e.g.</text>
<path d="M62.8 327.4H73.8M62.8 336.9H67.8M70.8 336.9H73.8" stroke="#7a7a7a" stroke-width="1.0" />
<text x="62.5" y="334.7" font-family="Liberation Sans" font-size="7.4" fill="#7a7a7a" textLength="11.2" lengthAdjust="spacingAndGlyphs">e.g.</text>
<path d="M62.8 351.4H73.8M62.8 360.9H67.8M70.8 360.9H73.8" stroke="#7a7a7a" stroke-width="1.0" />
<text x="62.5" y="358.7" font-family="Liberation Sans" font-size="7.4" fill="#7a7a7a" textLength="11.2" lengthAdjust="spacingAndGlyphs">e.g.</text>
<path d="M62.8 375.4H73.8M62.8 384.9H67.8M70.8 384.9H73.8" stroke="#7a7a7a" stroke-width="1.0" />
<text x="62.5" y="382.7" font-family="Liberation Sans" font-size="7.4" fill="#7a7a7a" textLength="11.2" lengthAdjust="spacingAndGlyphs">e.g.</text>
<path d="M32.4 402.2L35.9 405.7L39.4 402.2" stroke="#6b6b6b" stroke-width="1.2" />
<path d="M46.4 400.2Q46.4 398.4 48.199999999999996 398.4H50.4Q51.199999999999996 398.4 51.699999999999996 399.2L52.3 400.2Q52.9 401.29999999999995 53.8 401.29999999999995H56.599999999999994Q58.4 401.29999999999995 58.4 403.09999999999997V407.7Q58.4 409.5 56.599999999999994 409.5H48.199999999999996Q46.4 409.5 46.4 407.7Z" stroke="#8c8c8c" stroke-width="1.15" />
<path d="M40.8 426.2L44.3 429.7L47.8 426.2" stroke="#6b6b6b" stroke-width="1.2" />
<text x="54.2" y="431" font-family="Liberation Sans" font-weight="700" font-size="8.8" fill="#a5851d" textLength="18.8" lengthAdjust="spacingAndGlyphs">POST</text>
<path d="M62.8 447.4H73.8M62.8 456.9H67.8M70.8 456.9H73.8" stroke="#7a7a7a" stroke-width="1.0" />
<text x="62.5" y="454.7" font-family="Liberation Sans" font-size="7.4" fill="#7a7a7a" textLength="11.2" lengthAdjust="spacingAndGlyphs">e.g.</text>
<path d="M62.8 471.4H73.8M62.8 480.9H67.8M70.8 480.9H73.8" stroke="#7a7a7a" stroke-width="1.0" />
<text x="62.5" y="478.7" font-family="Liberation Sans" font-size="7.4" fill="#7a7a7a" textLength="11.2" lengthAdjust="spacingAndGlyphs">e.g.</text>
<path d="M62.8 495.4H73.8M62.8 504.9H67.8M70.8 504.9H73.8" stroke="#7a7a7a" stroke-width="1.0" />
<text x="62.5" y="502.7" font-family="Liberation Sans" font-size="7.4" fill="#7a7a7a" textLength="11.2" lengthAdjust="spacingAndGlyphs">e.g.</text>
<path d="M32.4 522.2L35.9 525.7L39.4 522.2" stroke="#6b6b6b" stroke-width="1.2" />
<path d="M46.4 520.1999999999999Q46.4 518.4 48.199999999999996 518.4H50.4Q51.199999999999996 518.4 51.699999999999996 519.1999999999999L52.3 520.1999999999999Q52.9 521.3 53.8 521.3H56.599999999999994Q58.4 521.3 58.4 523.1V527.6999999999999Q58.4 529.5 56.599999999999994 529.5H48.199999999999996Q46.4 529.5 46.4 527.6999999999999Z" stroke="#8c8c8c" stroke-width="1.15" />
<path d="M42.5 544.4L46.3 547.9L42.5 551.4" stroke="#6b6b6b" stroke-width="1.2" />
<text x="54.2" y="551" font-family="Liberation Sans" font-weight="700" font-size="8.8" fill="#a5851d" textLength="18.8" lengthAdjust="spacingAndGlyphs">POST</text>
<path d="M42.5 568.4L46.3 571.9L42.5 575.4" stroke="#6b6b6b" stroke-width="1.2" />
<text x="54.2" y="575" font-family="Liberation Sans" font-weight="700" font-size="8.8" fill="#a5851d" textLength="18.8" lengthAdjust="spacingAndGlyphs">POST</text>
<path d="M32.4 594.2L35.9 597.7L39.4 594.2" stroke="#6b6b6b" stroke-width="1.2" />
<path d="M46.4 592.1999999999999Q46.4 590.4 48.199999999999996 590.4H50.4Q51.199999999999996 590.4 51.699999999999996 591.1999999999999L52.3 592.1999999999999Q52.9 593.3 53.8 593.3H56.599999999999994Q58.4 593.3 58.4 595.1V599.6999999999999Q58.4 601.5 56.599999999999994 601.5H48.199999999999996Q46.4 601.5 46.4 599.6999999999999Z" stroke="#8c8c8c" stroke-width="1.15" />
<path d="M42.5 616.4L46.3 619.9L42.5 623.4" stroke="#6b6b6b" stroke-width="1.2" />
<path d="M54.6 616.1999999999999Q54.6 614.4 56.4 614.4H58.6Q59.4 614.4 59.9 615.1999999999999L60.5 616.1999999999999Q61.1 617.3 62.0 617.3H64.8Q66.6 617.3 66.6 619.1V623.6999999999999Q66.6 625.5 64.8 625.5H56.4Q54.6 625.5 54.6 623.6999999999999Z" stroke="#8c8c8c" stroke-width="1.15" />
<path d="M26 640.2L30 643.8L26 647.4" stroke="#6b6b6b" stroke-width="1.2" />
<path d="M26 664.2L30 667.8L26 671.4" stroke="#6b6b6b" stroke-width="1.2" />
<path d="M209.5 664.5V666Q209.5 668 211.5 668H216Q218 668 218 666V664.5M213.8 668V670" stroke="#b5b5b5" stroke-width="1.1" />
<circle cx="209.5" cy="663.8" r="1.8" fill="#c4c4c4"/>
<circle cx="218" cy="663.8" r="1.8" fill="#c4c4c4"/>
<circle cx="213.8" cy="671.8" r="1.8" fill="#c4c4c4"/>
<path d="M20.3 774.4L24 778.0L20.3 781.6" stroke="#3d3d3d" stroke-width="1.2" />
<path d="M20.3 798.4L24 802.0L20.3 805.6" stroke="#3d3d3d" stroke-width="1.2" />
<path d="M20.3 822.4L24 826.0L20.3 829.6" stroke="#3d3d3d" stroke-width="1.2" />
<path d="M20 848H27.5V853.5H20ZM20 850.2H27.5M23.7 853.5V858M19.5 858H28" stroke="#b0b0b0" stroke-width="1.1" />
<rect x="108.2" y="847.2" width="11.5" height="11.5" rx="1.5" stroke="#3d3d3d" stroke-width="1.1"/>
<path d="M108.5 849.8H119.5M110.5 852L112.5 853.5L110.5 855M113.5 856H117" stroke="#3d3d3d" stroke-width="1.0" />
<rect x="179.2" y="847.2" width="11.5" height="11.5" rx="1.5" stroke="#b0b0b0" stroke-width="1.1"/>
<path d="M181.5 850L183.5 851.5L181.5 853M184.5 854H187.5" stroke="#b0b0b0" stroke-width="1.0" />
<circle cx="1287" cy="852.9" r="5.6" stroke="#5f5f5f" stroke-width="1.1" fill="none"/>
<path d="M1284.5 853L1286.4 854.9L1289.8 851" stroke="#5f5f5f" stroke-width="1.1" />
<path d="M1502 850.3H1514M1502 855.3H1514" stroke="#5f5f5f" stroke-width="1.1" />
<circle cx="1506" cy="850.3" r="1.8" fill="#ffffff"/>
<circle cx="1506" cy="850.3" r="1.6" stroke="#5f5f5f" stroke-width="1.0" fill="none"/>
<circle cx="1510" cy="855.3" r="1.8" fill="#ffffff"/>
<circle cx="1510" cy="855.3" r="1.6" stroke="#5f5f5f" stroke-width="1.0" fill="none"/>
<rect x="1526.3" y="847.3" width="11.4" height="11" rx="1.5" stroke="#5f5f5f" stroke-width="1.1"/>
<rect x="1528" y="848.5" width="3.5" height="8.5" fill="#5f5f5f"/>
<rect x="1549.3" y="847.3" width="13.4" height="11" rx="1.5" stroke="#5f5f5f" stroke-width="1.1"/>
<rect x="1550.5" y="854.5" width="11" height="2.6" fill="#5f5f5f"/>
<rect x="1574.3" y="847.3" width="11.4" height="11" rx="1.5" stroke="#5f5f5f" stroke-width="1.1"/>
<path d="M1581.8 847.5V858" stroke="#5f5f5f" stroke-width="1.1" />
<path d="M756.5 92.3H765M757 92.8L757.6 102.2Q757.8 103.5 759 103.5H762.5Q763.7 103.5 763.9 102.2L764.5 92.8M757.3 95H764.2" stroke="#9a9a9a" stroke-width="1.1" />
<path d="M1099.5 97.5H1112M1105.75 91.2V103.8" stroke="#6b6b6b" stroke-width="1.3" />
<path d="M1445.5 96.2L1448.65 99.8L1451.8 96.2" stroke="#6b6b6b" stroke-width="1.2" />
<path d="M1552.5 96L1556.25 100L1560 96" stroke="#5a5a5a" stroke-width="1.2" />
<path d="M1578 93H1581.5M1583.5 93H1588M1578 96.5H1581.5M1583.5 96.5H1588M1584 100H1588M1584 103.5H1588M1578 99.5L1581.5 103.5M1581.5 99.5L1578 103.5" stroke="#5a5a5a" stroke-width="1.1" />
<path d="M420.2 128.5H431.8L429.6 126.4" stroke="#1d6f84" stroke-width="1.2" />
<path d="M431.8 139.5H420.2L422.4 141.6" stroke="#1d6f84" stroke-width="1.2" />
<text x="417.9" y="137.7" font-family="Liberation Sans" font-weight="700" font-size="9.6" fill="#1d6f84" textLength="16" lengthAdjust="spacingAndGlyphs">HTTP</text>
<path d="M532.2 131.8L535.4 134.7L532.2 137.6" stroke="#9a9a9a" stroke-width="1.1" />
<path d="M565.2 128.8L568.6 131.7L565.2 134.6" stroke="#6b6b6b" stroke-width="1.1" />
<path d="M1427.5 128.5Q1427.5 127.3 1428.7 127.3H1437L1440.3 130.6V139.3Q1440.3 140.5 1439.1 140.5H1428.7Q1427.5 140.5 1427.5 139.3ZM1430.5 127.5V130.3Q1430.5 131 1431.2 131H1435.5Q1436.2 131 1436.2 130.3V127.5M1430.2 140.3V136.3Q1430.2 135.3 1431.2 135.3H1436.5Q1437.5 135.3 1437.5 136.3V140.3" stroke="#a6a6a6" stroke-width="1.1" />
<path d="M1488.3 132.2L1491.8 135.8L1495.3 132.2" stroke="#3d3d3d" stroke-width="1.3" />
<g transform="translate(1575 134) rotate(-45) scale(1.32)" stroke="#3d3d3d" stroke-width="0.9"><path d="M-0.6 -2.1H-3.3A2.1 2.1 0 0 0 -3.3 2.1H-1.1A2.1 2.1 0 0 0 0.9 -0.9"/><path d="M0.6 2.1H3.3A2.1 2.1 0 0 0 3.3 -2.1H1.1A2.1 2.1 0 0 0 -0.9 0.9"/></g>
<path d="M498.4 174.8L502.0 178.6L505.6 174.8" stroke="#6b6b6b" stroke-width="1.2" />
<path d="M1572.5 174.5L1576.0 178L1579.5 174.5" stroke="#ffffff" stroke-width="1.2" />
<path d="M420.3 208.4H429.7M420.3 211.5H427.6M420.3 214.5H429.7M420.3 217.5H425.7" stroke="#5a5a5a" stroke-width="1.1" />
<circle cx="753.8" cy="213.7" r="2.9" fill="#3db35a"/>
<path d="M1004.3 245.2L1007.65 248.6L1011 245.2" stroke="#3f51c9" stroke-width="1.2" />
<path d="M1445.3 243.4H1448.8M1452 243.4H1460.6M1445.3 250.4H1454M1457.3 250.4H1460.6" stroke="#5a5a5a" stroke-width="1.1" />
<circle cx="1450.4" cy="243.4" r="1.6" stroke="#5a5a5a" stroke-width="1.1" fill="none"/>
<circle cx="1455.7" cy="250.4" r="1.6" stroke="#5a5a5a" stroke-width="1.1" fill="none"/>
<path d="M695.3 532.8A6.7 6.7 0 1 1 695.3 539.5" stroke="#3d3d3d" stroke-width="1.2" />
<path d="M692.5 531.3L694.1 535.3L697.8 534.2" stroke="#3d3d3d" stroke-width="1.2" />
<path d="M702.5 532.3Q700.5 535 701.3 537L702.5 538.5" stroke="#3d3d3d" stroke-width="1.2" />
<circle cx="1305" cy="535.6" r="1.6" fill="#d4d4d4"/>
<circle cx="1357.5" cy="535.6" r="1.6" fill="#d4d4d4"/>
<circle cx="1408" cy="535.6" r="1.6" fill="#d4d4d4"/>
<circle cx="1423" cy="535.2" r="6.6" stroke="#5a5a5a" stroke-width="1.2" fill="none"/>
<path d="M1416.5 535.2H1429.5M1423 528.6Q1419.5 531.5 1419.5 535.2Q1419.5 538.9 1423 541.8M1423 528.6Q1426.5 531.5 1426.5 535.2" stroke="#5a5a5a" stroke-width="1.1" />
<rect x="1424.6" y="534" width="9" height="10" fill="#ffffff"/>
<rect x="1425.3" y="538" width="6.6" height="4.8" rx="0.8" fill="#ffffff" stroke="#5a5a5a" stroke-width="1.1"/>
<path d="M1426.9 538V536.6Q1426.9 534.6 1428.6 534.6Q1430.3 534.6 1430.3 536.6V538" stroke="#5a5a5a" stroke-width="1.1" />
<path d="M1450.7 530.3H1463.77M1450.7 541.51H1456.69M1460.23 541.51H1463.77" stroke="#5a5a5a" stroke-width="1.0" />
<text x="1450.4" y="538.914" font-family="Liberation Sans" font-size="8.732" fill="#5a5a5a" textLength="13.216" lengthAdjust="spacingAndGlyphs">e.g.</text>
<circle cx="1569.6" cy="536" r="1.45" fill="#3d3d3d"/>
<circle cx="1576.3" cy="536" r="1.45" fill="#3d3d3d"/>
<circle cx="1583" cy="536" r="1.45" fill="#3d3d3d"/>
<text x="419.8" y="573" font-family="Liberation Sans" font-size="14.5" fill="#212121" textLength="14.5" lengthAdjust="spacingAndGlyphs">{ }</text>
<path d="M480.2 566.3L483.6 569.8L487 566.3" stroke="#3d3d3d" stroke-width="1.3" />
<path d="M510.5 561.2V575.5L522 568.3Z" stroke="#5a5a5a" stroke-width="1.2" />
<rect x="589.5" y="561.5" width="13.3" height="13" rx="1" stroke="#5a5a5a" stroke-width="1.1"/>
<circle cx="593.5" cy="565.2" r="1.4" stroke="#5a5a5a" stroke-width="1.0" fill="none"/>
<path d="M589.8 573L594.5 568.5L598 571.5L600 569.8L602.5 572" stroke="#5a5a5a" stroke-width="1.1" />
<path d="M673.5 566.5L677.15 570.3L680.8 566.5" stroke="#6b6b6b" stroke-width="1.2" />
<path d="M1431.6 562.5H1444.6M1431.6 567.5H1441.5Q1444.6 567.5 1444.6 570.5Q1444.6 573.5 1441.5 573.5H1438.3M1431.6 573.5H1434.6M1440.3 571.4L1438 573.5L1440.3 575.6" stroke="#212121" stroke-width="1.2" />
<path d="M1472.2 563.5H1485.8M1475.2 567.5H1482.8M1477.2 571.5H1480.8" stroke="#5a5a5a" stroke-width="1.1" />
<circle cx="1505.5" cy="566.2" r="5.6" stroke="#5a5a5a" stroke-width="1.2" fill="none"/>
<path d="M1509.6 570.3L1513 573.7" stroke="#5a5a5a" stroke-width="1.2" />
<path d="M1541.4 569V563Q1541.4 561.3 1543.1 561.3H1549.3" stroke="#5a5a5a" stroke-width="1.2" />
<rect x="1544.6" y="564.2" width="10.1" height="10.1" rx="1.3" stroke="#5a5a5a" stroke-width="1.2"/>
<g transform="translate(1576.2 567.8) rotate(-45) scale(1.38)" stroke="#5a5a5a" stroke-width="0.87"><path d="M-0.6 -2.1H-3.3A2.1 2.1 0 0 0 -3.3 2.1H-1.1A2.1 2.1 0 0 0 0.9 -0.9"/><path d="M0.6 2.1H3.3A2.1 2.1 0 0 0 3.3 -2.1H1.1A2.1 2.1 0 0 0 -0.9 0.9"/></g>
</svg>
</div></body></html>
